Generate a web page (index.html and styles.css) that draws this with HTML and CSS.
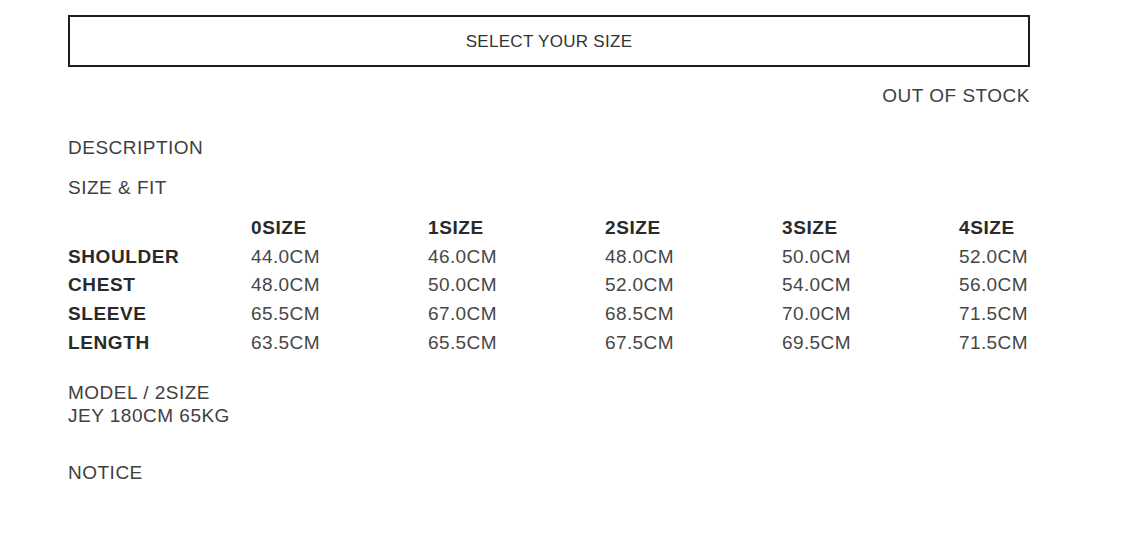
FILE: index.html
```html
<!DOCTYPE html>
<html lang="en">
<head>
<meta charset="utf-8">
<title>Product size</title>
<link rel="stylesheet" href="styles.css">
</head>
<body>
<main class="product">
  <button class="size-select" type="button">SELECT YOUR SIZE</button>
  <div class="stock">OUT OF STOCK</div>
  <section class="info">
    <div class="info-title desc">DESCRIPTION</div>
    <div class="info-title fit">SIZE &amp; FIT</div>
    <div class="size-table">
      <div class="cell"></div>
      <div class="cell head">0SIZE</div>
      <div class="cell head">1SIZE</div>
      <div class="cell head">2SIZE</div>
      <div class="cell head">3SIZE</div>
      <div class="cell head">4SIZE</div>

      <div class="cell label">SHOULDER</div>
      <div class="cell">44.0CM</div>
      <div class="cell">46.0CM</div>
      <div class="cell">48.0CM</div>
      <div class="cell">50.0CM</div>
      <div class="cell">52.0CM</div>

      <div class="cell label">CHEST</div>
      <div class="cell">48.0CM</div>
      <div class="cell">50.0CM</div>
      <div class="cell">52.0CM</div>
      <div class="cell">54.0CM</div>
      <div class="cell">56.0CM</div>

      <div class="cell label">SLEEVE</div>
      <div class="cell">65.5CM</div>
      <div class="cell">67.0CM</div>
      <div class="cell">68.5CM</div>
      <div class="cell">70.0CM</div>
      <div class="cell">71.5CM</div>

      <div class="cell label">LENGTH</div>
      <div class="cell">63.5CM</div>
      <div class="cell">65.5CM</div>
      <div class="cell">67.5CM</div>
      <div class="cell">69.5CM</div>
      <div class="cell">71.5CM</div>
    </div>
    <div class="model">
      <div>MODEL / 2SIZE</div>
      <div>JEY 180CM 65KG</div>
    </div>
    <div class="info-title notice">NOTICE</div>
  </section>
</main>
</body>
</html>
```

FILE: styles.css
```css
html, body {
  margin: 0;
  padding: 0;
  background: #ffffff;
}

body {
  font-family: "Liberation Sans", Arial, sans-serif;
  color: #404040;
}

.product {
  width: 962px;
  margin-left: 68px;
  padding-top: 15px;
  display: flex;
  flex-direction: column;
}

.size-select {
  box-sizing: border-box;
  width: 962px;
  height: 52px;
  border: 2px solid #1e1e1e;
  background: #fff;
  margin: 0;
  padding: 1px 0 0 0;
  font-family: inherit;
  font-size: 17px;
  letter-spacing: 0.3px;
  color: #333;
  text-align: center;
  cursor: pointer;
}

.stock {
  margin-top: 17px;
  align-self: flex-end;
  font-size: 19px;
  line-height: 24px;
  letter-spacing: 0.5px;
  margin-right: 0;
  color: #404040;
}

.info {
  display: flex;
  flex-direction: column;
  margin-top: 28px;
}

.info-title {
  font-size: 19px;
  line-height: 24px;
  letter-spacing: 0.5px;
}

.fit {
  margin-top: 16px;
}

.size-table {
  margin-top: 14px;
  display: grid;
  grid-template-columns: 183px repeat(4, 177px) auto;
  grid-auto-rows: 28.6px;
  align-items: center;
}

.cell {
  font-size: 19px;
  line-height: 24px;
  letter-spacing: 0.4px;
  color: #474747;
  white-space: nowrap;
}

.cell.head,
.cell.label {
  font-weight: bold;
  color: #2a2a2a;
  letter-spacing: 0.6px;
}

.model {
  margin-top: 24px;
  font-size: 19px;
  line-height: 23px;
  letter-spacing: 0.5px;
}

.notice {
  margin-top: 34px;
}
```
